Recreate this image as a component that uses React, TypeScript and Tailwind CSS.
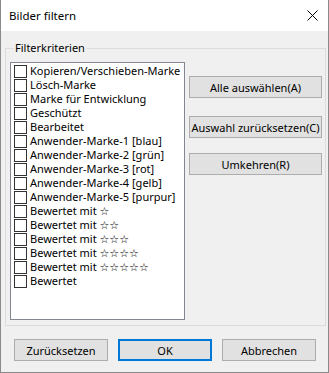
const items = [
  "Kopieren/Verschieben-Marke",
  "Lösch-Marke",
  "Marke für Entwicklung",
  "Geschützt",
  "Bearbeitet",
  "Anwender-Marke-1 [blau]",
  "Anwender-Marke-2 [grün]",
  "Anwender-Marke-3 [rot]",
  "Anwender-Marke-4 [gelb]",
  "Anwender-Marke-5 [purpur]",
  "Bewertet mit ☆",
  "Bewertet mit ☆☆",
  "Bewertet mit ☆☆☆",
  "Bewertet mit ☆☆☆☆",
  "Bewertet mit ☆☆☆☆☆",
  "Bewertet",
];

function Button({ label, primary, className }: { label: string; primary?: boolean; className?: string }) {
  return (
    <button
      className={
        "flex items-center justify-center whitespace-nowrap bg-[#e1e1e1] leading-none " +
        (primary ? "border-2 border-[#0078d7] " : "border border-[#adadad] ") +
        (className ?? "")
      }
    >
      {label}
    </button>
  );
}

export default function App() {
  return (
    <div className="w-[329px] h-[373px] flex flex-col bg-[#f0f0f0] border-x border-b border-[#8a8a8a] font-['Segoe_UI','Noto_Sans','DejaVu_Sans',sans-serif] text-[11px] text-black">
      {/* Title bar */}
      <div className="h-[31px] bg-white flex items-center justify-between pl-[8px] pr-[10px]">
        <span className="text-[11.5px]">Bilder filtern</span>
        <svg width="11" height="11" viewBox="0 0 11 11" stroke="#000" strokeWidth="1">
          <path d="M0.5 0.5l10 10M10.5 0.5l-10 10" />
        </svg>
      </div>

      {/* Group box */}
      <div className="relative mt-[17px] ml-[4px] mr-[2px] h-[278px] border border-[#dcdcdc]">
        <span className="absolute -top-[9px] left-[8px] px-[1px] bg-[#f0f0f0] leading-[16px]">Filterkriterien</span>
        <div className="flex mt-[13px] ml-[4px]">
          <div className="w-[175px] h-[258px] bg-white border border-[#828790] pt-[1px] pl-[3px]">
            {items.map((item) => (
              <div key={item} className="flex items-center h-[14px] gap-[3px]">
                <span className="w-[13px] h-[13px] border border-[#333] bg-white shrink-0" />
                <span className="whitespace-nowrap leading-[14px]">{item}</span>
              </div>
            ))}
          </div>
          <div className="flex flex-col ml-[4px] w-[133px]">
            <Button label="Alle auswählen(A)" className="h-[22px] mt-[14px]" />
            <Button label="Auswahl zurücksetzen(C)" className="h-[22px] mt-[18px]" />
            <Button label="Umkehren(R)" className="h-[22px] mt-[15px]" />
          </div>
        </div>
      </div>

      {/* Bottom buttons */}
      <div className="flex gap-[10px] mt-[13px] ml-[13px]">
        <Button label="Zurücksetzen" className="w-[94px] h-[22px]" />
        <Button label="OK" primary className="w-[94px] h-[22px]" />
        <Button label="Abbrechen" className="w-[94px] h-[22px]" />
      </div>
    </div>
  );
}
